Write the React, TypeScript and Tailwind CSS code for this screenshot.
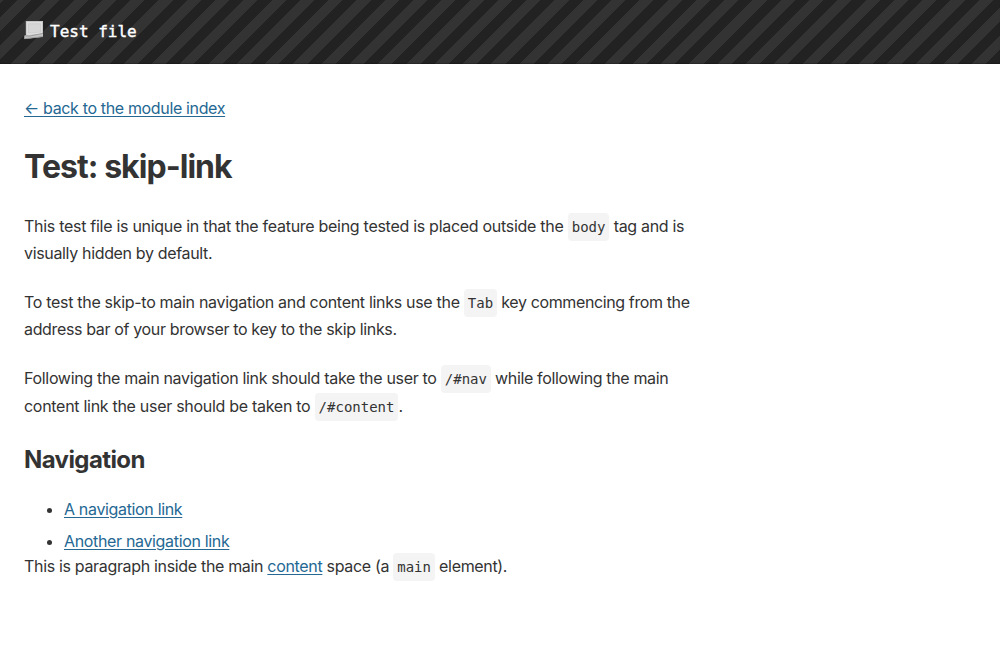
import type { ReactNode } from "react";

function Code({ children }: { children: ReactNode }) {
  return (
    <code className="rounded bg-[#f4f4f4] px-1 py-[6px] font-['DejaVu_Sans_Mono',monospace] text-[14px] leading-none tracking-normal">
      {children}
    </code>
  );
}

function Link({ children }: { children: ReactNode }) {
  return (
    <a href="#content" className="text-[#246893] underline decoration-1 underline-offset-2">
      {children}
    </a>
  );
}

function PageIcon() {
  return (
    <svg width="20" height="20" viewBox="0 0 20 20" aria-hidden="true">
      <path d="M1.8 1H19v15.8L.5 19v-3.2l1.3-.5z" fill="#bcbcbc" />
      <path d="M2.5 1.8h15.8v12l-15.8 1.4z" fill="#dedede" />
      <path d="M4.5 3.8h12v8.3l-12 .8z" fill="#d6d6d6" stroke="#cacaca" strokeWidth=".7" />
      <path d="M.5 15.8 19 13.4v3.4L.5 19z" fill="#c4c4c4" />
      <path d="m.5 15.8 5 .3 13.5-2.7M.7 18.7 19 16.6" fill="none" stroke="#8f8f8f" strokeWidth=".8" />
    </svg>
  );
}

export default function App() {
  return (
    <div className="min-h-[660px] bg-white font-['Inter',sans-serif] text-[16px] leading-[27.2px] tracking-[-0.31px] text-[#333]">
      <header className="flex h-16 items-center bg-[repeating-linear-gradient(-45deg,#222,#222_10px,#333_10px,#333_20px)] px-6 shadow-[inset_0_-1px_1px_rgba(0,0,0,0.2)]">
        <div className="flex items-start gap-[6px] pb-[2px] font-['DejaVu_Sans_Mono',monospace] tracking-normal text-white">
          <div className="pt-[3px]">
            <PageIcon />
          </div>
          <span className="pt-px [-webkit-text-stroke:0.4px_white]">Test file</span>
        </div>
      </header>
      <main className="px-6 pt-[31px]">
        <p className="tracking-[-0.35px]">
          <Link>← back to the module index</Link>
        </p>
        <h1 className="mt-[25px] text-[32px] leading-[40px] font-bold tracking-[-0.95px]">Test: skip-link</h1>
        <p className="mt-[26px]">
          <span className="tracking-[-0.285px]">
            This test file is unique in that the feature being tested is placed outside the{" "}
          </span>
          <Code>body</Code> tag and is
          <br />
          <span className="tracking-[-0.34px]">visually hidden by default.</span>
        </p>
        <p className="mt-[21.6px]">
          <span className="tracking-[-0.305px]">To test the skip-to main navigation and content links use the </span>
          <Code>Tab</Code>
          <span className="tracking-[-0.38px]"> key commencing from the</span>
          <br />
          <span className="tracking-[-0.35px]">address bar of your browser to key to the skip links.</span>
        </p>
        <p className="mt-[20.5px] leading-[28px]">
          <span className="tracking-[-0.32px]">Following the main navigation link should take the user to </span>
          <Code>/#nav</Code>
          <span className="tracking-[-0.36px]"> while following the main</span>
          <br />
          <span className="tracking-[-0.29px]">content link the user should be taken to </span>
          <Code>/#content</Code>.
        </p>
        <h2 className="mt-[23.5px] text-[24px] leading-[32px] font-bold tracking-[-0.6px]">Navigation</h2>
        <ul className="mt-[20px] list-disc pl-10 tracking-[-0.34px]">
          <li className="mb-[4.8px]">
            <Link>A navigation link</Link>
          </li>
          <li>
            <Link>Another navigation link</Link>
          </li>
        </ul>
        <p className="mt-[-2px] tracking-[-0.33px]">
          This is paragraph inside the main <Link>content</Link> space (a <Code>main</Code> element).
        </p>
      </main>
    </div>
  );
}
